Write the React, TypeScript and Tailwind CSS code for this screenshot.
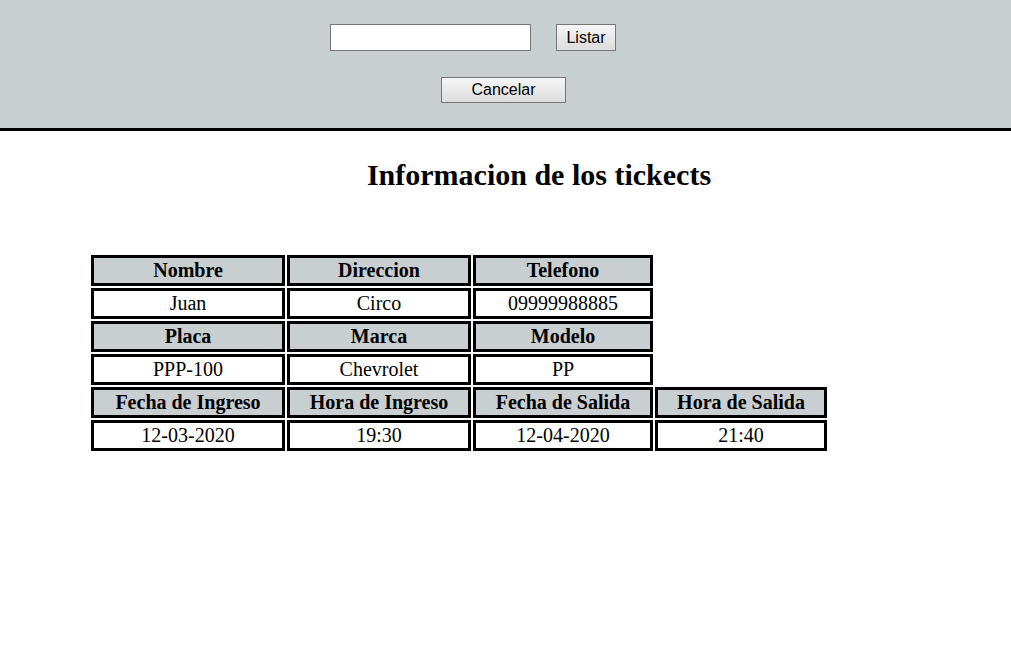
import React from "react";

const widths = ["w-[194px]", "w-[184px]", "w-[180px]", "w-[172px]"];

function Row({ cells, head }: { cells: string[]; head?: boolean }) {
  return (
    <div className="flex gap-[2px]">
      {cells.map((c, i) => (
        <div
          key={i}
          className={`${widths[i]} h-[31px] border-[3px] border-black flex items-center justify-center text-[20px] leading-[23px] text-black ${
            head ? "bg-[#c9ced1] font-bold" : "bg-white"
          }`}
        >
          {c}
        </div>
      ))}
    </div>
  );
}

export default function App() {
  return (
    <div className="w-[1011px] h-[658px] bg-white overflow-hidden">
      <div
        className="h-[131px] bg-[#c9ced1] border-b-[3px] border-black flex flex-col pt-[24px] gap-[26px]"
        style={{ fontFamily: '"Liberation Sans", Arial, sans-serif' }}
      >
        <div className="flex justify-center gap-[25px] pr-[65px]">
          <input
            type="text"
            className="w-[201px] h-[27px] bg-white border border-[#767676] outline-none"
          />
          <button className="w-[60px] h-[27px] border border-[#767676] bg-gradient-to-b from-[#f6f6f6] to-[#dcdcdc] text-[16px] text-black">
            Listar
          </button>
        </div>
        <div className="flex justify-center pr-[4px]">
          <button className="w-[125px] h-[26px] border border-[#767676] bg-gradient-to-b from-[#f6f6f6] to-[#dcdcdc] text-[16px] text-black">
            Cancelar
          </button>
        </div>
      </div>
      <div style={{ fontFamily: '"Liberation Serif", "Times New Roman", serif' }}>
        <h1 className="mt-[26px] pl-[67px] text-center text-[30px] font-bold leading-[35px] text-black">
          Informacion de los tickects
        </h1>
        <div className="mt-[63px] pl-[91px] flex flex-col gap-[2px]">
          <Row head cells={["Nombre", "Direccion", "Telefono"]} />
          <Row cells={["Juan", "Circo", "09999988885"]} />
          <Row head cells={["Placa", "Marca", "Modelo"]} />
          <Row cells={["PPP-100", "Chevrolet", "PP"]} />
          <Row head cells={["Fecha de Ingreso", "Hora de Ingreso", "Fecha de Salida", "Hora de Salida"]} />
          <Row cells={["12-03-2020", "19:30", "12-04-2020", "21:40"]} />
        </div>
      </div>
    </div>
  );
}
